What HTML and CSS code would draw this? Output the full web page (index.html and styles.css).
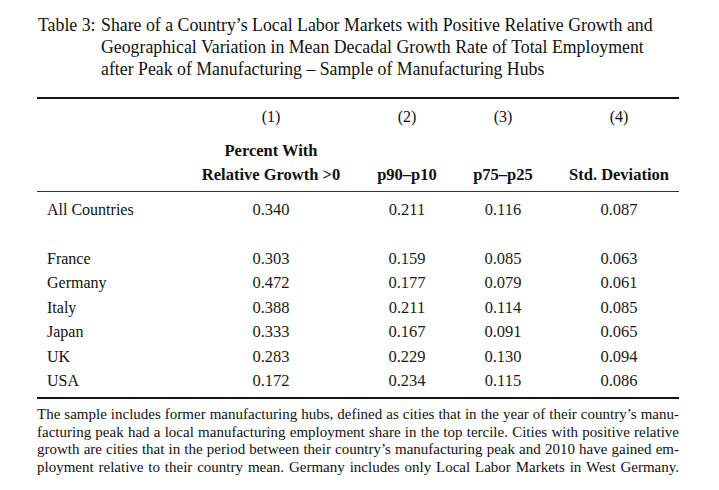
FILE: index.html
```html
<!DOCTYPE html>
<html lang="en">
<head>
<meta charset="utf-8">
<title>Table 3</title>
<link rel="stylesheet" href="styles.css">
</head>
<body>
<div class="page">
  <div class="caption">
    <div class="cap-label">Table 3:</div>
    <div class="cap-text">
      <div class="line">Share of a Country’s Local Labor Markets with Positive Relative Growth and</div>
      <div class="line">Geographical Variation in Mean Decadal Growth Rate of Total Employment</div>
      <div class="line">after Peak of Manufacturing – Sample of Manufacturing Hubs</div>
    </div>
  </div>

  <div class="tbl">
    <div class="grid head">
      <div></div>
      <div class="c">(1)</div>
      <div class="c">(2)</div>
      <div class="c">(3)</div>
      <div class="c">(4)</div>

      <div class="spacer"></div>

      <div></div>
      <div class="c b">Percent With</div>
      <div></div>
      <div></div>
      <div></div>

      <div></div>
      <div class="c b">Relative Growth &gt;0</div>
      <div class="c b">p90–p10</div>
      <div class="c b">p75–p25</div>
      <div class="c b">Std. Deviation</div>
    </div>

    <div class="grid body">
      <div class="l">All Countries</div>
      <div class="c n">0.340</div>
      <div class="c n">0.211</div>
      <div class="c n">0.116</div>
      <div class="c n">0.087</div>

      <div class="blank"></div>

      <div class="l">France</div>
      <div class="c n">0.303</div>
      <div class="c n">0.159</div>
      <div class="c n">0.085</div>
      <div class="c n">0.063</div>

      <div class="l">Germany</div>
      <div class="c n">0.472</div>
      <div class="c n">0.177</div>
      <div class="c n">0.079</div>
      <div class="c n">0.061</div>

      <div class="l">Italy</div>
      <div class="c n">0.388</div>
      <div class="c n">0.211</div>
      <div class="c n">0.114</div>
      <div class="c n">0.085</div>

      <div class="l">Japan</div>
      <div class="c n">0.333</div>
      <div class="c n">0.167</div>
      <div class="c n">0.091</div>
      <div class="c n">0.065</div>

      <div class="l">UK</div>
      <div class="c n">0.283</div>
      <div class="c n">0.229</div>
      <div class="c n">0.130</div>
      <div class="c n">0.094</div>

      <div class="l">USA</div>
      <div class="c n">0.172</div>
      <div class="c n">0.234</div>
      <div class="c n">0.115</div>
      <div class="c n">0.086</div>
    </div>
  </div>

  <div class="note">
    <div class="nl">The sample includes former manufacturing hubs, defined as cities that in the year of their country’s manu-</div>
    <div class="nl">facturing peak had a local manufacturing employment share in the top tercile. Cities with positive relative</div>
    <div class="nl">growth are cities that in the period between their country’s manufacturing peak and 2010 have gained em-</div>
    <div class="nl">ployment relative to their country mean. Germany includes only Local Labor Markets in West Germany.</div>
  </div>
</div>
</body>
</html>
```

FILE: styles.css
```css
html, body {
  margin: 0;
  padding: 0;
  background: #ffffff;
}

body {
  font-family: "Liberation Serif", "Times New Roman", serif;
  color: #111111;
  width: 719px;
  height: 490px;
  overflow: hidden;
}

.page {
  margin-left: 37px;
  width: 642px;
}

.caption {
  display: flex;
  padding-top: 13.5px;
  font-size: 17.8px;
  line-height: 22px;
  margin-left: 1px;
}

.cap-label {
  width: 63px;
  flex: none;
  white-space: nowrap;
}

.cap-text .line {
  white-space: nowrap;
}

.tbl {
  margin-top: 17.5px;
  border-top: 2px solid #151515;
  border-bottom: 2px solid #151515;
}

.grid {
  display: grid;
  grid-template-columns: 1fr 140px 60px 60px 100px;
  column-gap: 36px;
  padding: 0 10px;
}

.head {
  font-size: 16px;
  line-height: 24px;
  padding-top: 5.5px;
  padding-bottom: 3.5px;
  border-bottom: 1px solid #333333;
}

.head .spacer {
  grid-column: 1 / -1;
  height: 10.5px;
}

.body {
  font-size: 16.5px;
  line-height: 24.5px;
  padding-top: 6px;
  padding-bottom: 3px;
}

.body .blank {
  grid-column: 1 / -1;
  height: 24.5px;
}

.c {
  text-align: center;
  white-space: nowrap;
}

.b {
  font-weight: bold;
  font-size: 16.5px;
}

.l {
  font-size: 16px;
  white-space: nowrap;
}

.n {
  color: #1a1a1a;
}

.note {
  margin-top: 7.5px;
  font-size: 15px;
  line-height: 17.6px;
}

.nl {
  text-align: justify;
  text-align-last: justify;
  white-space: normal;
}
```
